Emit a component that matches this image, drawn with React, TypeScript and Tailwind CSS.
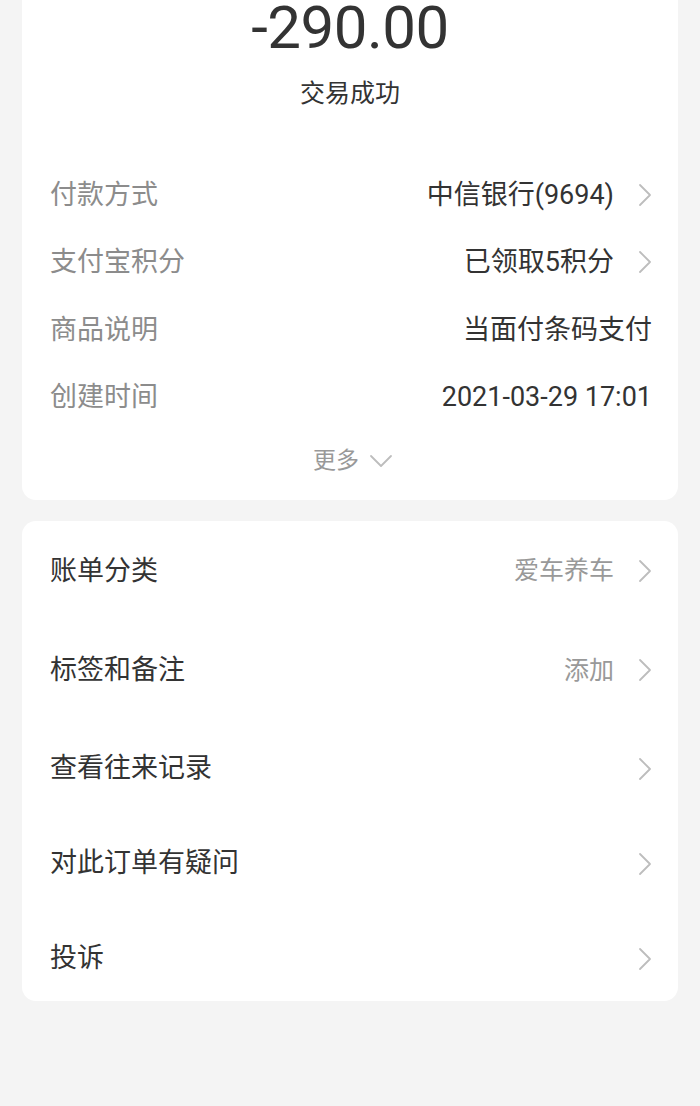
import React from "react";

const font = { fontFamily: 'Roboto, "Noto Sans CJK SC", sans-serif' };

function ChevronRight() {
  return (
    <svg width="14" height="24" viewBox="0 0 14 24" fill="none" className="shrink-0">
      <path d="M2 2 L12 12 L2 22" stroke="#bdbdbd" strokeWidth="1.8" strokeLinecap="round" strokeLinejoin="round" />
    </svg>
  );
}

function ChevronDown() {
  return (
    <svg width="24" height="14" viewBox="0 0 24 14" fill="none">
      <path d="M2 2 L12 12 L22 2" stroke="#bdbdbd" strokeWidth="1.8" strokeLinecap="round" strokeLinejoin="round" />
    </svg>
  );
}

const details = [
  { label: "付款方式", value: "中信银行(9694)", arrow: true },
  { label: "支付宝积分", value: "已领取5积分", arrow: true },
  { label: "商品说明", value: "当面付条码支付", arrow: false },
  { label: "创建时间", value: "2021-03-29 17:01", arrow: false },
];

const actions = [
  { label: "账单分类", value: "爱车养车", h: "h-[99.5px]" },
  { label: "标签和备注", value: "添加", h: "h-[99.5px]" },
  { label: "查看往来记录", value: "", h: "h-[97px]" },
  { label: "对此订单有疑问", value: "", h: "h-[93px]" },
  { label: "投诉", value: "", h: "h-[91px] pt-[6px]" },
];

export default function App() {
  return (
    <div className="w-[700px] h-[1106px] bg-[#f4f4f4] overflow-hidden" style={font}>
      <div className="mx-[22px] bg-white rounded-b-[14px] h-[500px] flex flex-col">
        <div className="h-[56px] flex items-center justify-center text-[60px] leading-none text-[#333] tracking-[-0.5px]">
          -290.00
        </div>
        <div className="h-[70px] flex items-center justify-center text-[25px] text-[#333] mt-[3px]">
          交易成功
        </div>
        <div className="h-[32px]" />
        {details.map((d) => (
          <div key={d.label} className="h-[67.5px] flex items-center pl-[28px] pr-[26px]">
            <span className="text-[27px] text-[#8c8c8c]">{d.label}</span>
            <span className="ml-auto text-[27px] text-[#333]">{d.value}</span>
            {d.arrow ? <span className="ml-[24px] flex"><ChevronRight /></span> : null}
          </div>
        ))}
        <div className="flex items-center justify-center gap-[10px] mt-[10px] pl-[6px] h-[40px]">
          <span className="text-[23px] text-[#999]">更多</span>
          <ChevronDown />
        </div>
      </div>
      <div className="mx-[22px] mt-[21px] bg-white rounded-[14px] h-[480px] overflow-hidden flex flex-col">
        {actions.map((a) => (
          <div key={a.label} className={`${a.h} shrink-0 flex items-center pl-[28px] pr-[26px]`}>
            <span className="text-[27px] text-[#333]">{a.label}</span>
            <span className="ml-auto text-[25px] text-[#999]">{a.value}</span>
            <span className="ml-[24px] flex"><ChevronRight /></span>
          </div>
        ))}
      </div>
    </div>
  );
}
